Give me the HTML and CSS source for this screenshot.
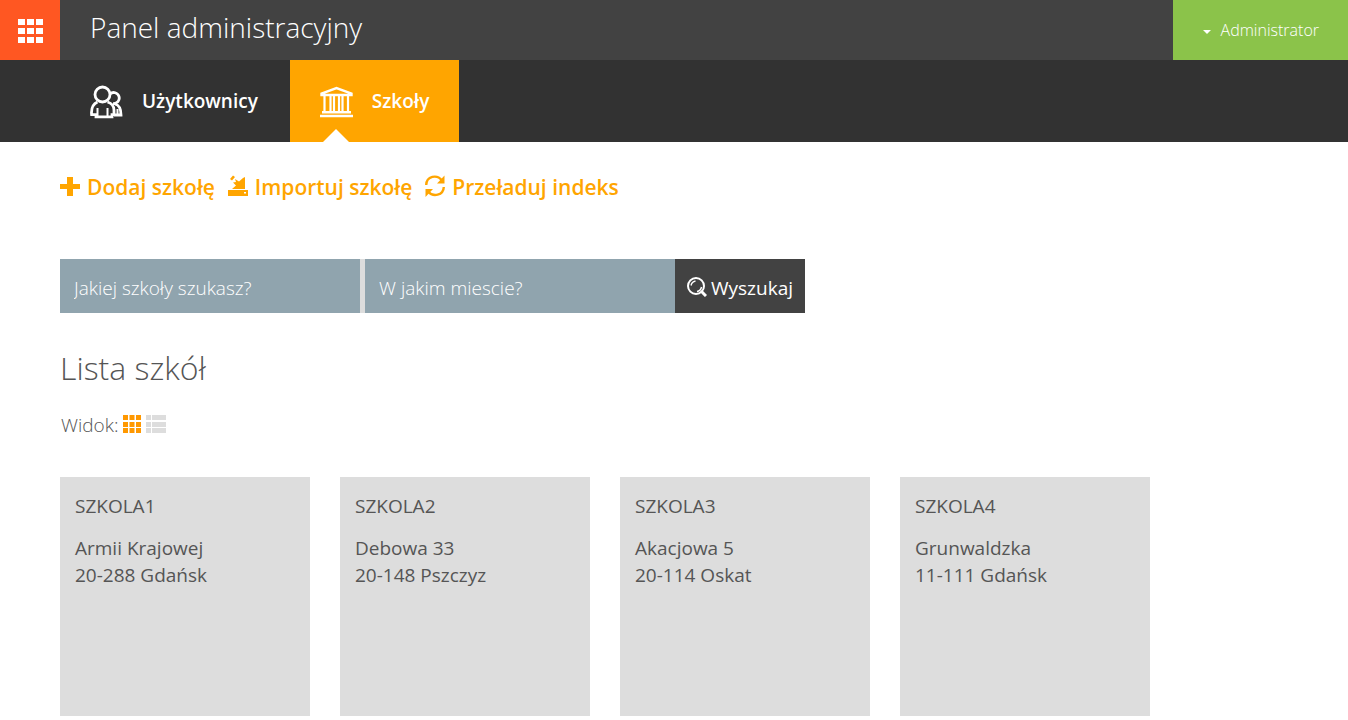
FILE: index.html
```html
<!DOCTYPE html>
<html lang="pl">
<head>
<meta charset="utf-8">
<title>Panel administracyjny</title>
<link rel="stylesheet" href="styles.css">
</head>
<body>
<header class="topbar">
  <button class="apps" type="button" aria-label="Aplikacje">
    <svg width="26" height="24" viewBox="0 0 26 24" fill="currentColor"><path d="M0 0h7v6H0zM9 0h7v6H9zM18 0h7v6h-7zM0 9h7v6H0zM9 9h7v6H9zM18 9h7v6h-7zM0 18h7v6H0zM9 18h7v6H9zM18 18h7v6h-7z"/></svg>
  </button>
  <h1 class="brand">Panel administracyjny</h1>
  <button class="account" type="button"><span class="caret"></span>Administrator</button>
</header>
<nav class="tabs">
  <a class="tab" href="#">
    <svg width="34" height="34" viewBox="0 0 34 34" fill="none" stroke="currentColor" stroke-width="2.8"><circle cx="12.500" cy="9.500" r="7.500"/><path d="M20 9a5.500 5.500 0 1 1 3 9.500M7.500 17C3 19 1 23 1.600 29.600H6v2.200h16v-2.200h2V25c0-4-2-6.500-6.500-8M25 19c4 1 6 5 6 11h-7"/><path stroke-width="2" d="M7.500 23v8M17.500 23v8M27.500 24v6"/></svg>
    <span>Użytkownicy</span>
  </a>
  <a class="tab tab-active" href="#" aria-current="page">
    <svg width="34" height="34" viewBox="0 0 34 34" fill="none" stroke="currentColor" stroke-width="2.4"><path d="M1.500 10V8.500L16.500 3l15 5.500V10zM2 27.200h29M0 31h33"/><path stroke-width="2.200" d="M4.500 10v17M10.500 10v17M14 10v17M19 10v17M22.500 10v17M28 10v17"/></svg>
    <span>Szkoły</span>
  </a>
</nav>
<main class="content">
  <div class="actions">
    <a class="action" href="#"><svg width="20" height="22" viewBox="0 0 20 22" fill="currentColor"><path d="M7 2h6v7h7v5h-7v7H7v-7H0V9h7z"/></svg>Dodaj szkołę</a>
    <a class="action" href="#"><svg width="20" height="22" viewBox="0 0 20 22" fill="currentColor"><path fill-rule="evenodd" d="M0 15h20v6H0zM16 17h2v1.500h-2zM7 4l4 2.500L15 3l2-1v12H4l4-3.500-3-3 3-.5zM2 4l3-3.500L7 2 4 5.500z"/></svg>Importuj szkołę</a>
    <a class="action" href="#"><svg width="20" height="22" viewBox="0 0 20 22" fill="none" stroke="currentColor" stroke-width="2.400"><path d="M1.200 10C1.500 1 12-1 17 5.500M18.800 12C18.500 20.500 8 22.500 3 16.500"/><path stroke="none" fill="currentColor" d="M19.500.5v8H12zM.5 22v-8H8z"/></svg>Przeładuj indeks</a>
  </div>
  <form class="search">
    <input class="field field-name" type="text" aria-label="Szkoła" placeholder="Jakiej szkoły szukasz?">
    <input class="field field-city" type="text" aria-label="Miasto" placeholder="W jakim miescie?">
    <button class="submit" type="button"><svg width="20" height="20" viewBox="0 0 20 20" fill="none" stroke="currentColor" stroke-width="2"><circle cx="9" cy="9" r="8"/><path stroke-width="1.400" d="M4 8.500c.5-2.500 2-4 4.500-4.500M10 14.500c3-.5 4-2 4.500-4.500"/><path d="M14 14l5 5" stroke-width="3"/></svg>Wyszukaj</button>
  </form>
  <h2 class="title">Lista szkół</h2>
  <div class="view">
    <span>Widok:</span>
    <button class="mode mode-on" type="button" aria-label="Kafelki"><svg width="18" height="18" viewBox="0 0 18 18" fill="currentColor"><path d="M0 0h5v5H0zM6.500 0h5v5h-5zM13 0h5v5h-5zM0 7h5v5H0zM6.500 7h5v5h-5zM13 7h5v5h-5zM0 13h5v5H0zM6.500 13h5v5h-5zM13 13h5v5h-5z"/></svg></button>
    <button class="mode" type="button" aria-label="Lista"><svg width="20" height="18" viewBox="0 0 20 18" fill="currentColor"><path d="M0 0h5v5H0zM6 0h14v5H6zM0 7h5v5H0zM6 7h14v5H6zM0 13h5v5H0zM6 13h14v5H6z"/></svg></button>
  </div>
  <div class="cards">
    <article class="card"><h3>SZKOLA1</h3><p>Armii Krajowej<br>20-288 Gdańsk</p></article>
    <article class="card"><h3>SZKOLA2</h3><p>Debowa 33<br>20-148 Pszczyz</p></article>
    <article class="card"><h3>SZKOLA3</h3><p>Akacjowa 5<br>20-114 Oskat</p></article>
    <article class="card"><h3>SZKOLA4</h3><p>Grunwaldzka<br>11-111 Gdańsk</p></article>
  </div>
</main>
</body>
</html>
```
FILE: styles.css
```css
* { box-sizing: border-box; }
body { margin: 0; background: #fff; color: #555; font-family: "Open Sans", sans-serif; font-size: 19px; }
svg { display: block; flex: none; }
button, input { font: inherit; border: 0; border-radius: 0; padding: 0; }
a { color: inherit; text-decoration: none; }
h1, h2, h3, p { margin: 0; font-size: inherit; font-weight: 400; }
.topbar { display: flex; height: 60px; background: #424242; color: #fff; }
.apps { display: flex; align-items: center; justify-content: center; width: 60px; padding: 2px 0 0 1px; background: #ff5722; color: #fff; }
.brand { flex: 1; padding-left: 30px; font-size: 28px; line-height: 54px; font-weight: 300; }
.account { display: flex; align-items: center; gap: 9px; padding: 0 29px 0 30px; background: #8bc34a; color: #fff; font-size: 16px; font-weight: 300; }
.caret { border: 4px solid transparent; border-top-color: #fff; border-bottom: 0; margin: 4px 1px 0 0; }
.tabs { display: flex; padding-left: 60px; background: #323232; }
.tab { position: relative; display: flex; align-items: center; gap: 18px; height: 82px; padding: 0 32px 0 30px; color: #fff; font-weight: 600; }
.tab svg { margin-top: 2px; }
.tab-active { padding-right: 30px; background: #ffa500; }
.tab-active::after { content: ""; position: absolute; left: 33px; bottom: 0; border: 13px solid transparent; border-bottom-color: #fff; border-top: 0; }
.content { padding: 30px 60px 4px; }
.actions { display: flex; flex-wrap: wrap; gap: 13px; color: #ffa500; font-size: 21px; line-height: 30px; font-weight: 600; }
.action { display: flex; align-items: center; gap: 7px; }
.action svg { margin-bottom: 2px; }
.search { display: flex; margin-top: 57px; }
.field { height: 54px; padding: 4px 14px 0; background: #90a4ae; color: #fff; font-weight: 300; }
.field::placeholder { color: #fff; opacity: 1; }
.field-name { width: 300px; }
.field-city { width: 315px; border-left: 5px solid #ddd; }
.submit { display: flex; align-items: center; justify-content: center; gap: 4px; width: 130px; padding-top: 4px; background: #424242; color: #fff; }
.submit svg { margin-bottom: 2px; }
.title { margin-top: 33px; font-size: 32px; line-height: 44px; font-weight: 300; }
.view { display: flex; align-items: center; gap: 5px; margin-top: 22px; padding-left: 1px; line-height: 26px; font-weight: 300; }
.mode { margin-bottom: 2px; background: none; color: #ddd; }
.mode-on { color: #ff9800; }
.cards { display: grid; grid-template-columns: repeat(auto-fill, 250px); gap: 30px; margin-top: 39px; }
.card { min-height: 239px; padding: 16px 15px; background: #ddd; line-height: 27px; }
.card p { margin-top: 15px; }
```
